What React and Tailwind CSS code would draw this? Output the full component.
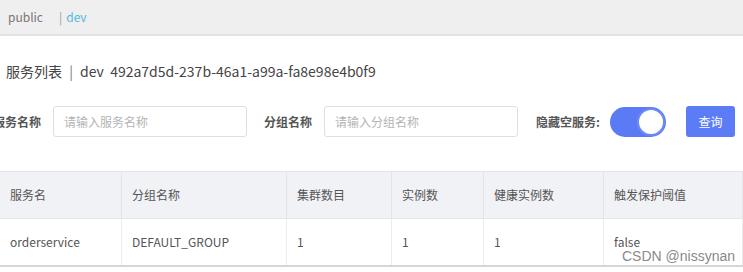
const COLUMNS = [
  { key: 'name', label: '服务名', width: 'w-[122px]' },
  { key: 'group', label: '分组名称', width: 'w-[165px]' },
  { key: 'clusters', label: '集群数目', width: 'w-[105px]' },
  { key: 'instances', label: '实例数', width: 'w-[92px]' },
  { key: 'healthy', label: '健康实例数', width: 'w-[120px]' },
  { key: 'threshold', label: '触发保护阈值', width: 'flex-1' },
]

const ROWS = [
  {
    name: 'orderservice',
    group: 'DEFAULT_GROUP',
    clusters: '1',
    instances: '1',
    healthy: '1',
    threshold: 'false',
  },
]

function Field({ label, placeholder }) {
  return (
    <div className="flex items-center">
      <span className="text-[12px] font-semibold text-[#555]">{label}</span>
      <div className="ml-3 flex h-[31px] w-[194px] items-center rounded-[3px] border border-[#dcdfe6] px-2.5 text-[12px] text-[#b4b4b4]">
        {placeholder}
      </div>
    </div>
  )
}

export default function App() {
  return (
    <div
      className="relative h-[272px] w-[743px] overflow-hidden bg-white text-[#333]"
      style={{ fontFamily: '"Noto Sans CJK SC", "Liberation Sans", sans-serif' }}
    >
      <div className="flex h-[36px] items-center border-b-2 border-[#e2e2e2] bg-[#efefef] pl-2 text-[12px]">
        <span className="text-[#777]">public</span>
        <span className="ml-4 text-[#a89c95]">|</span>
        <span className="ml-1 text-[#55b9dc]">dev</span>
      </div>

      <div className="ml-[6px] mt-[25px] text-[14px] text-[#444]">
        服务列表 <span className="mx-1 text-[#777]">|</span> dev&nbsp; 492a7d5d-237b-46a1-a99a-fa8e98e4b0f9
      </div>

      <div className="ml-[-7px] mt-[24px] flex items-center">
        <Field label="服务名称" placeholder="请输入服务名称" />
        <div className="ml-[17px]">
          <Field label="分组名称" placeholder="请输入分组名称" />
        </div>
        <span className="ml-[18px] text-[12px] font-semibold text-[#555]">隐藏空服务:</span>
        <div className="ml-[10px] flex h-[30px] w-[56px] items-center justify-end rounded-full bg-[#5b7bf5] p-[1px]">
          <div className="h-[28px] w-[28px] rounded-full border-2 border-[#6c8af7] bg-white" />
        </div>
        <button className="ml-[20px] h-[31px] w-[49px] rounded-[3px] bg-[#5c7cf7] text-[12px] text-white">
          查询
        </button>
      </div>

      <div className="mt-[34px] w-[743px] border-b-2 border-[#d6d6d6]">
        <div className="flex h-[48px] border-y border-[#e4e6ea] bg-[#f1f2f5]">
          {COLUMNS.map((col) => (
            <div
              key={col.key}
              className={`${col.width} flex items-center border-r border-[#e2e4e8] pl-[10px] text-[12px] text-[#555]`}
            >
              {col.label}
            </div>
          ))}
        </div>
        {ROWS.map((row) => (
          <div key={row.name} className="flex h-[46px] bg-white">
            {COLUMNS.map((col) => (
              <div
                key={col.key}
                className={`${col.width} flex items-center border-r border-[#ececec] pl-[10px] text-[12px] text-[#555]`}
              >
                {row[col.key]}
              </div>
            ))}
          </div>
        ))}
      </div>

      <div
        className="absolute left-[622px] top-[246px] text-[14px] text-[#8a8a8a]"
        style={{ fontFamily: '"Liberation Sans", sans-serif' }}
      >
        CSDN @nissynan
      </div>
    </div>
  )
}
